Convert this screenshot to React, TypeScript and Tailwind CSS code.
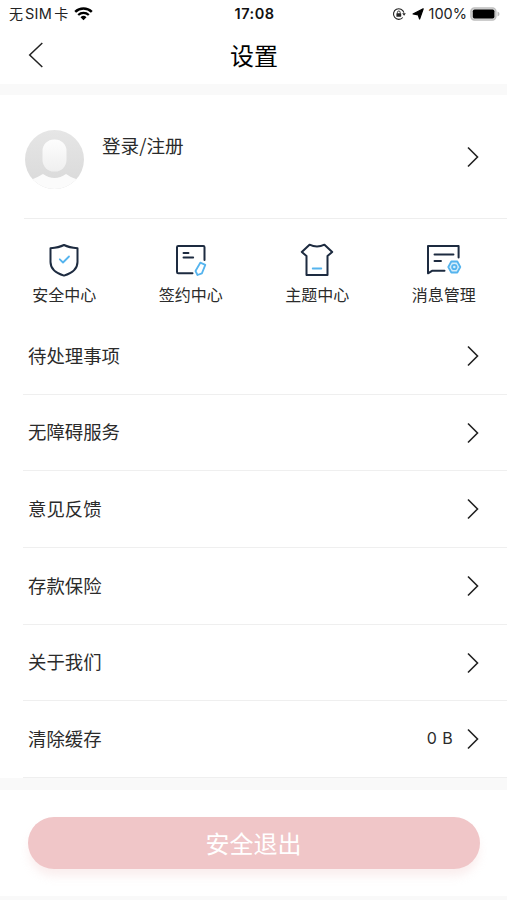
import type { ReactNode } from "react";

const NAVY = "#1d2b40";
const BLUE = "#55b4ee";

function ShieldIcon() {
  return (
    <svg width="36" height="36" viewBox="0 0 36 36" fill="none" strokeLinejoin="round" strokeLinecap="round">
      <path d="M18 3 C14 5 9.500 5.800 4.500 6.200 V20 C4.500 27.500 11 31.500 18 33.600 C25 31.500 31.500 27.500 31.500 20 V6.200 C26.500 5.800 22 5 18 3 Z" stroke={NAVY} strokeWidth="2" />
      <path d="M13.800 17.300 L17 20.500 L23 14.500" stroke={BLUE} strokeWidth="1.8" />
    </svg>
  );
}

function ContractIcon() {
  return (
    <svg width="36" height="36" viewBox="0 0 36 36" fill="none" strokeLinejoin="round" strokeLinecap="round">
      <path d="M19.500 31.300 H5.200 Q4 31.300 4 30 V5.200 Q4 4 5.200 4 H30.300 Q31.500 4 31.500 5.200 V18" stroke={NAVY} strokeWidth="2" />
      <path d="M10.500 11 H15.500 M10.500 15.500 H20.200" stroke={NAVY} strokeWidth="1.9" />
      <path d="M27.300 20.700 L32.300 22.800 L28.900 31.300 L24.500 33 L22.500 29 Z" stroke={BLUE} strokeWidth="1.8" />
    </svg>
  );
}

function ShirtIcon() {
  return (
    <svg width="36" height="36" viewBox="0 0 36 36" fill="none" strokeLinejoin="round" strokeLinecap="round">
      <path d="M10.500 2.700 Q18 6.500 25.500 2.700 L33.200 10 L28.500 14 V33 H7.500 V14 L2.800 10 Z" stroke={NAVY} strokeWidth="2" />
      <path d="M13.700 26.500 H22.300" stroke={BLUE} strokeWidth="1.8" />
    </svg>
  );
}

function MessageIcon() {
  return (
    <svg width="36" height="36" viewBox="0 0 36 36" fill="none" strokeLinejoin="round" strokeLinecap="round">
      <path d="M18.500 28.800 H6 L2 31.300 V4 H32.600 V15.500" stroke={NAVY} strokeWidth="2" />
      <path d="M8.500 12.500 H27.500 M8.500 19 H15" stroke={NAVY} strokeWidth="1.9" />
      <path d="M25.300 19.500 H31.300 L34.300 25 L31.300 30.500 H25.300 L22.300 25 Z" fill="#d5edfb" stroke={BLUE} strokeWidth="1.8" />
      <circle cx="28.300" cy="25" r="2.200" stroke={BLUE} strokeWidth="1.8" />
    </svg>
  );
}

function ChevronRight() {
  return (
    <svg width="14" height="22" viewBox="0 0 14 22" fill="none" className="shrink-0">
      <path d="M2 1.500 L11.500 11 L2 20.500" stroke="#222" strokeWidth="1.6" />
    </svg>
  );
}

function StatusBar() {
  return (
    <div className="grid h-[27px] grid-cols-[1fr_auto_1fr] items-center pr-[7px] pl-[9px] font-[Inter,'Noto_Sans_CJK_SC',sans-serif] text-[14px] text-[#222]">
      <div className="flex items-center">
        <span className="flex items-center gap-[2px] whitespace-nowrap">
          <span>无</span>
          <span className="text-[14.500px] tracking-[0.300px]">SIM</span>
          <span>卡</span>
        </span>
        <svg width="19" height="14" viewBox="0 0 19 14" fill="none" className="ml-[6px]">
          <path d="M1.200 4.900 A12 12 0 0 1 17.800 4.900" stroke="#000" strokeWidth="2.500" />
          <path d="M4.200 8 A7.800 7.800 0 0 1 14.800 8" stroke="#000" strokeWidth="2.300" />
          <path d="M9.500 13.200 L6.500 10.200 A4.300 4.300 0 0 1 12.500 10.200 Z" fill="#000" />
        </svg>
      </div>
      <span className="text-[14.500px] font-semibold tracking-[0.500px] text-[#111]">17:08</span>
      <div className="flex items-center justify-end">
        <svg width="14" height="14" viewBox="0 0 14 14" fill="none">
          <path d="M11.900 5.600 A5.300 5.300 0 1 0 10.800 10.500" stroke="#222" strokeWidth="1.100" />
          <path d="M10.200 6.200 H13.800 L12.100 8.800 Z" fill="#222" />
          <rect x="4.400" y="6.300" width="4.800" height="3.400" rx="0.500" fill="#222" />
          <path d="M5.400 6.500 V5.400 A1.400 1.400 0 0 1 8.200 5.400 V6.500" stroke="#222" strokeWidth="0.900" />
        </svg>
        <svg width="12" height="12" viewBox="0 0 12 12" className="ml-[6px]">
          <path d="M11.200 0.800 L7.600 11 L6.200 6.800 L1 6 Z" fill="#000" stroke="#000" strokeWidth="1.200" strokeLinejoin="round" />
        </svg>
        <span className="ml-[5px] text-[14.500px]">100%</span>
        <svg width="30" height="14" viewBox="0 0 30 14" className="ml-[3px]">
          <rect x="0.900" y="0.900" width="25" height="12.200" rx="3.500" fill="#d4d4d4" stroke="#bdbdbd" strokeWidth="1.400" />
          <rect x="2.800" y="2.500" width="21.600" height="9" rx="1.800" fill="#000" />
          <path d="M27.500 4.600 Q29.500 5.300 29.500 7 Q29.500 8.700 27.500 9.400 Z" fill="#bdbdbd" />
        </svg>
      </div>
    </div>
  );
}

function Avatar() {
  return (
    <svg width="60" height="60" viewBox="0 0 60 60" className="shrink-0">
      <defs>
        <linearGradient id="avatar-bg" x1="0" y1="0" x2="0" y2="1">
          <stop offset="0" stopColor="#e6e6e6" />
          <stop offset="1" stopColor="#d9d9d9" />
        </linearGradient>
        <linearGradient id="avatar-face" x1="0" y1="0" x2="0" y2="1">
          <stop offset="0" stopColor="#fdfdfd" />
          <stop offset="1" stopColor="#efefef" />
        </linearGradient>
        <clipPath id="avatar-clip">
          <circle cx="30.500" cy="30.500" r="29.500" />
        </clipPath>
      </defs>
      <g clipPath="url(#avatar-clip)">
        <rect width="60" height="60" fill="url(#avatar-bg)" />
        <path d="M0 54 L9 50 Q14 48 19 45 Q30.500 53 42 45 Q46 48 52 50 L60 54 V60 H0 Z" fill="#fbfbfb" />
        <rect x="18.500" y="10.500" width="24" height="32" rx="11.500" fill="url(#avatar-face)" />
      </g>
    </svg>
  );
}

const shortcuts: { label: string; icon: ReactNode }[] = [
  { label: "安全中心", icon: <ShieldIcon /> },
  { label: "签约中心", icon: <ContractIcon /> },
  { label: "主题中心", icon: <ShirtIcon /> },
  { label: "消息管理", icon: <MessageIcon /> },
];

const rows: { label: string; value?: string }[] = [
  { label: "待处理事项" },
  { label: "无障碍服务" },
  { label: "意见反馈" },
  { label: "存款保险" },
  { label: "关于我们" },
  { label: "清除缓存", value: "0 B" },
];

export default function App() {
  return (
    <div className="flex h-[900px] w-[507px] flex-col overflow-hidden bg-[#f9f9f9] font-['Noto_Sans_CJK_SC',sans-serif] text-[#2b2b2b]">
      <header className="h-[84px] shrink-0 bg-white">
        <StatusBar />
        <div className="grid h-[57px] grid-cols-[1fr_auto_1fr] items-center px-[27px]">
          <svg width="17" height="26" viewBox="0 0 17 26" fill="none" className="-mt-px">
            <path d="M15.300 1 L2.700 13 L15.300 25" stroke="#222" strokeWidth="1.500" />
          </svg>
          <h1 className="pb-[2px] pl-px text-2xl leading-none text-black">设置</h1>
        </div>
      </header>

      <main className="mt-[11px] h-[683px] shrink-0 bg-white">
        <section className="flex h-[123px] pt-[34px] pr-[27px] pl-[24px]">
          <Avatar />
          <span className="mt-[3px] ml-[18px] flex-1 text-[18.600px] leading-[26px]">登录/注册</span>
          <div className="mt-[17px]">
            <ChevronRight />
          </div>
        </section>

        <section className="ml-[24px] h-px bg-[#eeeeee]" />

        <section className="grid h-[99px] grid-cols-4 pt-[23px] pl-px">
          {shortcuts.map((s) => (
            <div key={s.label} className="flex flex-col items-center">
              {s.icon}
              <span className="mt-[4px] text-base leading-6">{s.label}</span>
            </div>
          ))}
        </section>

        <ul>
          {rows.map((row) => (
            <li key={row.label} className="ml-[23px] flex h-[76.700px] items-center border-b border-[#efefef] pr-[27px] pl-[5px]">
              <span className="flex-1 pb-px text-[18.400px]">{row.label}</span>
              {row.value && (
                <span className="mr-[13px] pb-[2px] font-[Inter,sans-serif] text-[16px] tracking-[0.400px]">{row.value}</span>
              )}
              <ChevronRight />
            </li>
          ))}
        </ul>
      </main>

      <footer className="mt-[12px] h-[106px] shrink-0 bg-white pt-[27px] pr-[27px] pl-[28px]">
        <button className="h-[52px] w-full rounded-full bg-[#f0c6c8] pr-px pb-px text-2xl text-white shadow-[0_8px_10px_-1px_rgba(240,198,200,0.3)]">
          安全退出
        </button>
      </footer>
    </div>
  );
}
